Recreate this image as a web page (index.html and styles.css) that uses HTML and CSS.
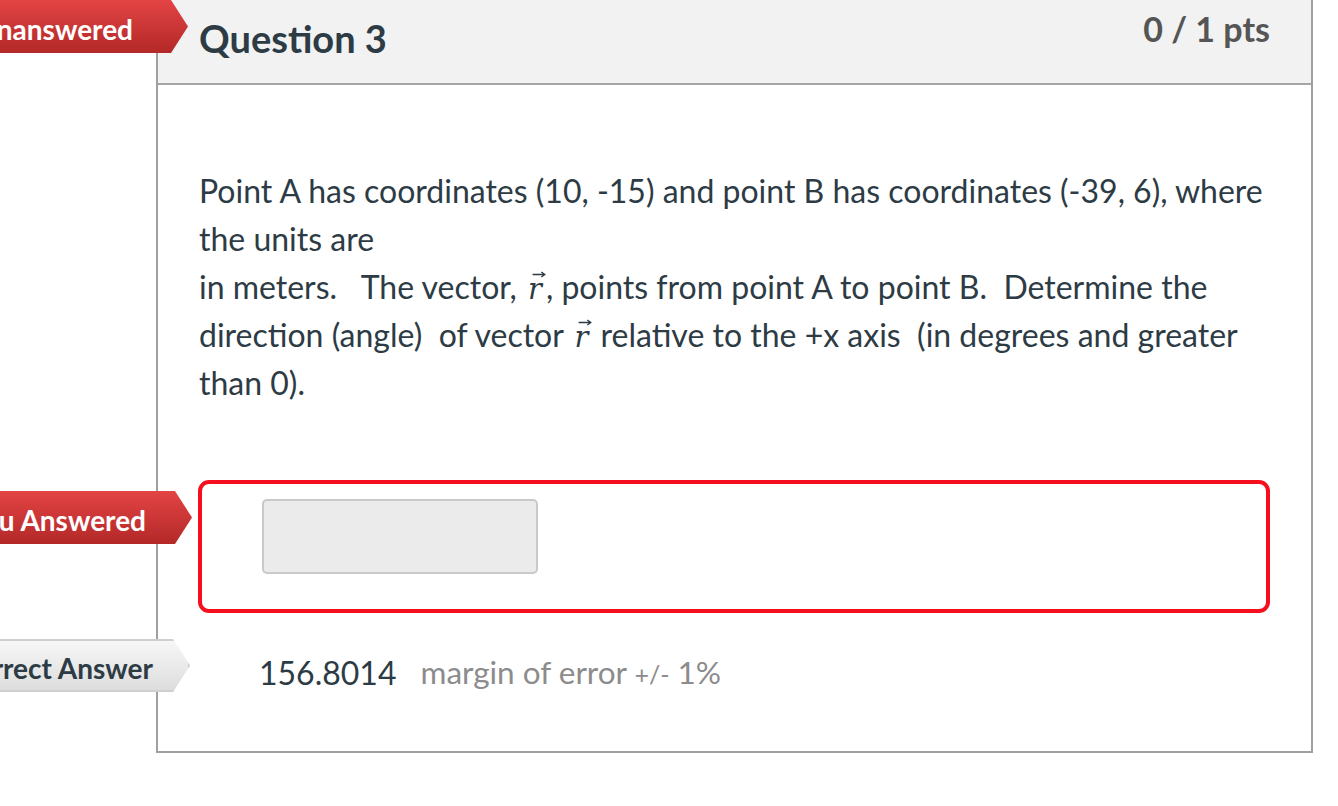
FILE: index.html
```html
<!DOCTYPE html>
<html>
<head>
<meta charset="utf-8">
<link rel="stylesheet" href="styles.css">
</head>
<body>
<div class="page">
  <div class="card">
    <div class="card-header">
      <h2 class="q-title">Question 3</h2>
      <div class="q-pts">0 / 1 pts</div>
    </div>
    <div class="card-body">
      <div class="q-text">
        Point A has coordinates (10, -15) and point B has coordinates (-39, 6), where the units are<br>
        in meters.&nbsp;&nbsp; The vector, <span class="vec"><span class="vec-r">r</span><svg class="vec-arrow" viewBox="0 0 12 6"><path d="M0.5 3H10.5M8 0.8L11 3L8 5.2" fill="none" stroke="#2d3b45" stroke-width="1.1"/></svg></span>, points from point A to point B.&nbsp; Determine the direction (angle)&nbsp; of vector <span class="vec"><span class="vec-r">r</span><svg class="vec-arrow" viewBox="0 0 12 6"><path d="M0.5 3H10.5M8 0.8L11 3L8 5.2" fill="none" stroke="#2d3b45" stroke-width="1.1"/></svg></span> relative to the +x axis&nbsp; (in degrees and greater than 0).
      </div>
      <div class="answer-box">
        <div class="answer-input"></div>
      </div>
      <div class="correct-row">
        <span class="correct-val">156.8014</span>
        <span class="margin">margin of error <span class="pm">+/-</span> 1%</span>
      </div>
    </div>
  </div>

  <div class="ribbon ribbon-red ribbon-unanswered"><span>Unanswered</span></div>
  <div class="ribbon ribbon-red ribbon-you"><span>You Answered</span></div>
  <div class="ribbon ribbon-gray ribbon-correct"><span>Correct Answer</span></div>
</div>
</body>
</html>
```

FILE: styles.css
```css
html, body {
  margin: 0;
  padding: 0;
  background: #ffffff;
}

body {
  font-family: Lato, "Open Sans", sans-serif;
  color: #2d3b45;
  overflow: hidden;
}

.page {
  position: relative;
  width: 1338px;
  height: 806px;
}

.card {
  margin-left: 156px;
  margin-top: -2px;
  width: 1157px;
  box-sizing: border-box;
  border: 2px solid #a0a0a0;
}

.card-header {
  height: 83px;
  background: #f2f2f2;
  border-bottom: 2px solid #a5a5a5;
  display: flex;
  justify-content: space-between;
  align-items: flex-start;
  padding: 0 41px;
}

.q-title {
  margin: 19px 0 0 0;
  font-size: 38px;
  line-height: 1;
  font-weight: 700;
  color: #2d3b45;
}

.q-pts {
  margin-top: 12px;
  font-size: 34px;
  line-height: 1;
  font-weight: 700;
  color: #555555;
}

.card-body {
  padding: 82px 41px 55px 40px;
}

.q-text {
  font-size: 32px;
  line-height: 48px;
  padding-left: 1px;
  color: #2d3b45;
}

.vec {
  position: relative;
  display: inline-block;
  line-height: 1;
  padding: 0 4px 0 3px;
}

.vec-r {
  font-family: "DejaVu Serif", "Liberation Serif", serif;
  font-style: italic;
  font-size: 29px;
}

.vec-arrow {
  position: absolute;
  left: 7px;
  top: 0px;
  width: 14px;
  height: 7px;
}

.answer-box {
  margin-top: 73px;
  height: 133px;
  box-sizing: border-box;
  border: 4px solid #f50f1e;
  border-radius: 11px;
  padding: 15px 0 0 60px;
}

.answer-input {
  width: 276px;
  height: 75px;
  box-sizing: border-box;
  background: #ebebeb;
  border: 2px solid #c9c9c9;
  border-radius: 5px;
}

.correct-row {
  margin-top: 35px;
  padding-left: 61px;
  height: 48px;
  display: flex;
  align-items: center;
  gap: 24px;
}

.correct-val {
  font-size: 32px;
  color: #2d3b45;
}

.margin {
  font-size: 31.5px;
  color: #8c8c8c;
}

.pm {
  font-size: 25px;
}

.ribbon {
  position: absolute;
  left: -100px;
  height: 53px;
  box-sizing: border-box;
  display: flex;
  align-items: center;
  justify-content: flex-end;
  padding-top: 5px;
  font-weight: 700;
  font-size: 28px;
  clip-path: polygon(0 0, calc(100% - 17px) 0, 100% 50%, calc(100% - 17px) 100%, 0 100%);
}

.ribbon-red {
  background: linear-gradient(#e34444, #b32828);
  color: #ffffff;
}

.ribbon-gray {
  background: linear-gradient(#f8f8f8, #dcdcdc);
  color: #2d3b45;
  box-shadow: inset 0 0 0 2px #cfcfcf;
}

.ribbon-unanswered {
  top: 2px;
  width: 288px;
  padding-right: 55px;
}

.ribbon-you {
  top: 493px;
  width: 292px;
  padding-right: 46px;
}

.ribbon-correct {
  top: 641px;
  width: 290px;
  padding-right: 37px;
}
```
